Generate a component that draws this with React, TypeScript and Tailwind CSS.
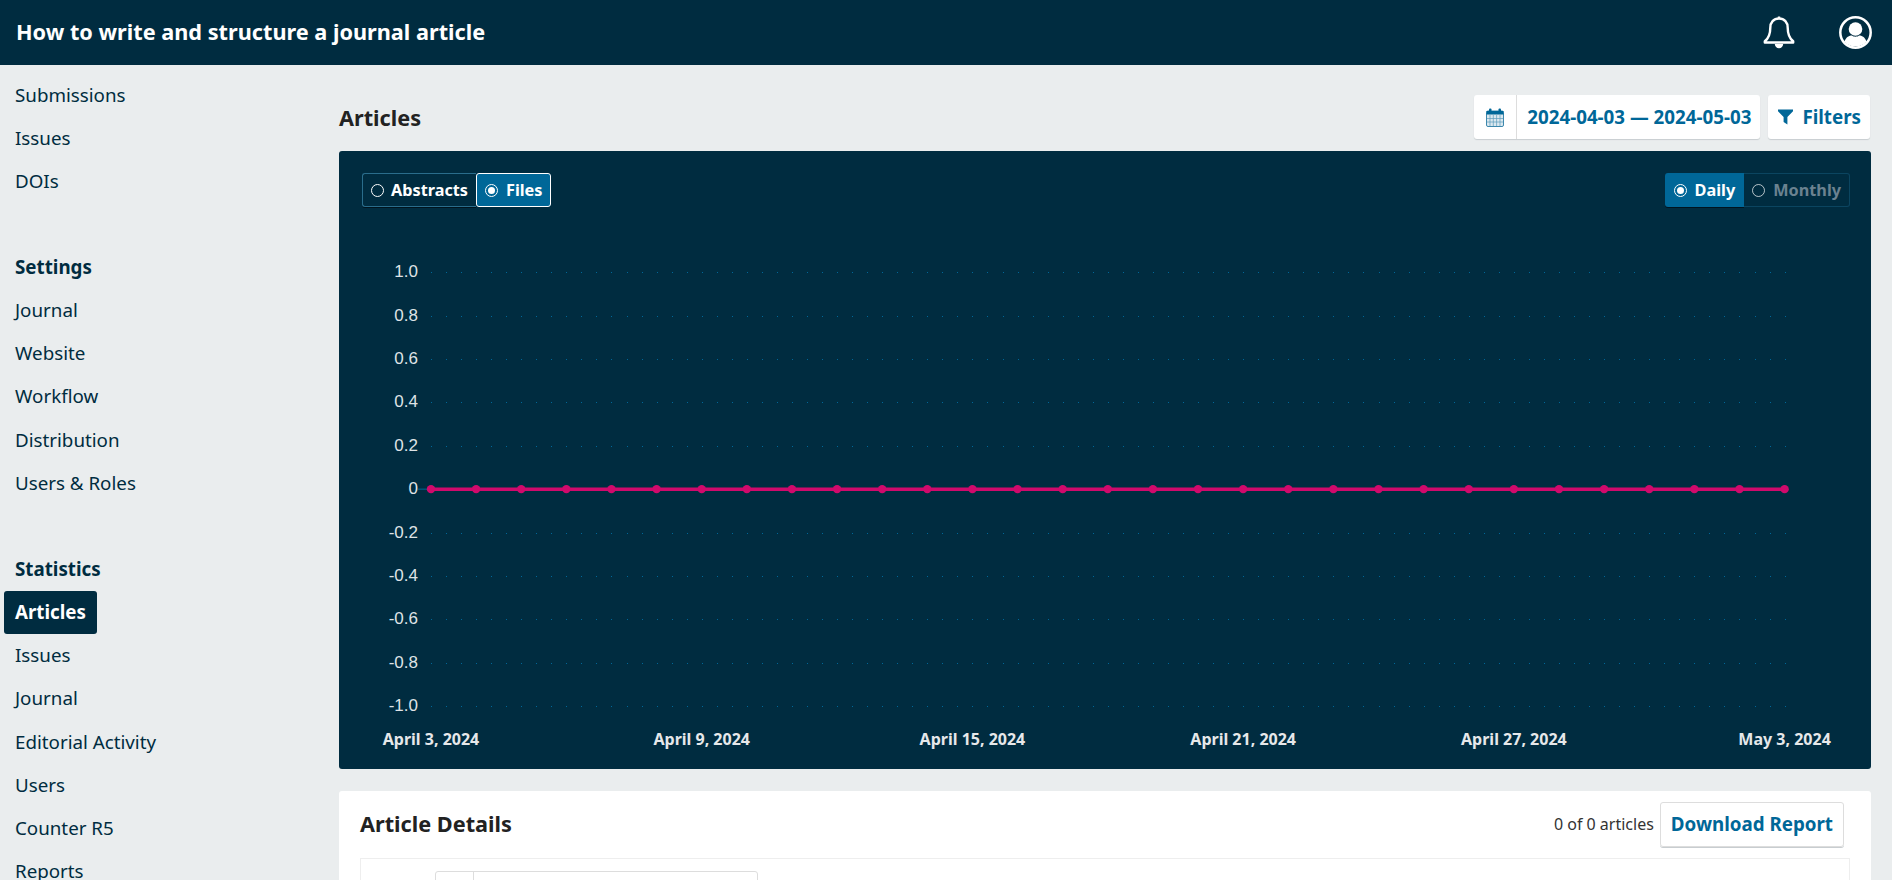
import React from 'react';

const font = 'font-["Noto_Sans",sans-serif]';

function NavItem({ label, active }: { label: string; active?: boolean }) {
  return (
    <li className="h-[43.2px] flex items-center">
      {active ? (
        <span className="ml-[4px] px-[11px] h-[43px] flex items-center rounded-[3px] bg-[#002c40] text-white font-bold">{label}</span>
      ) : (
        <span className="ml-[15px]">{label}</span>
      )}
    </li>
  );
}

function NavGroup({ title, items, active }: { title?: string; items: string[]; active?: string }) {
  return (
    <div className="mb-[43px]">
      {title && <div className="h-[43px] flex items-center ml-[15px] font-bold">{title}</div>}
      <ul>
        {items.map(i => <NavItem key={i} label={i} active={i === active} />)}
      </ul>
    </div>
  );
}

function Radio({ on }: { on?: boolean }) {
  return (
    <span className="w-[13px] h-[13px] rounded-full border border-white flex items-center justify-center shrink-0">
      {on && <span className="w-[7px] h-[7px] rounded-full bg-white" />}
    </span>
  );
}

const yLabels = ['1.0', '0.8', '0.6', '0.4', '0.2', '0', '-0.2', '-0.4', '-0.6', '-0.8', '-1.0'];
const xLabels = ['April 3, 2024', 'April 9, 2024', 'April 15, 2024', 'April 21, 2024', 'April 27, 2024', 'May 3, 2024'];

// chart is drawn from the left edge of the panel, just under the toggle row
function Chart() {
  const top = 65.3;
  const step = 43.37;
  const dots = Array.from({ length: 31 }, (_, i) => 92 + i * 45.12);
  const grid = Array.from({ length: 91 }, (_, i) => 92 + i * 15.04);
  return (
    <svg className="block" width="1532" height="550" viewBox="0 0 1532 550">
      {yLabels.map((l, i) => (
        <g key={l}>
          <text x="79" y={top + i * step + 5} textAnchor="end" fontSize="17" fontWeight="400" fill="#dfe3e6" fontFamily="Liberation Sans, Arial, sans-serif">{l}</text>
          {l !== '0' && grid.map(x => <rect key={x} x={Math.round(x)} y={Math.round(top + i * step)} width="1" height="1" fill="#006798" />)}
        </g>
      ))}
      <line x1="79" x2="92" y1={top + 5 * step} y2={top + 5 * step} stroke="#006798" strokeWidth="1" />
      <line x1="92" x2="1445.6" y1={top + 5 * step} y2={top + 5 * step} stroke="#d00a6c" strokeWidth="3.500" />
      {dots.map(x => <circle key={x} cx={x} cy={top + 5 * step} r="4.200" fill="#d00a6c" />)}
      {xLabels.map((l, i) => (
        <text key={l} x={92 + i * 270.72} y="538" textAnchor="middle" fontSize="16" fontWeight="700" fill="#e6e8ea" fontFamily="Noto Sans, sans-serif">{l}</text>
      ))}
    </svg>
  );
}

export default function App() {
  return (
    <div className={`${font} h-[880px] overflow-hidden bg-[#eaedee] text-[18.75px] text-[#002c40]`}>
      <header className="h-[65px] bg-[#002c40] text-white flex items-center justify-between pl-[16px] pr-[20px]">
        <h1 className="text-[21.700px] font-bold">How to write and structure a journal article</h1>
        <div className="flex items-center gap-[44px]">
          <svg width="32" height="35" viewBox="0 0 32 35" fill="none" stroke="white" strokeWidth="2.400" strokeLinejoin="round">
            <path d="M16 3.500c-5.500 0-8.700 4-8.700 9.200 0 6.500-1.400 10.400-5.500 13.600v1.200h28.400v-1.200c-4.100-3.200-5.500-7.100-5.500-13.600 0-5.200-3.200-9.200-8.700-9.200z" />
            <path d="M16 1.500v2" />
            <path d="M13 29a3 3 0 0 0 6 0" fill="white" />
          </svg>
          <svg width="33" height="33" viewBox="0 0 33 33">
            <circle cx="16.500" cy="16.500" r="15.200" fill="none" stroke="white" strokeWidth="2.500" />
            <circle cx="16.500" cy="13" r="6.800" fill="white" />
            <path d="M5.500 25.500c1.500-4.500 5-6 7.300-6 1 .8 2.400 1.200 3.700 1.200s2.700-.4 3.700-1.200c2.300 0 5.800 1.500 7.300 6-2.700 3.200-6.600 5-11 5s-8.300-1.800-11-5z" fill="white" />
          </svg>
        </div>
      </header>
      <div className="flex">
        <nav className="w-[339px] shrink-0 pt-[8px]">
          <NavGroup items={['Submissions', 'Issues', 'DOIs']} />
          <NavGroup title="Settings" items={['Journal', 'Website', 'Workflow', 'Distribution', 'Users & Roles']} />
          <NavGroup title="Statistics" items={['Articles', 'Issues', 'Journal', 'Editorial Activity', 'Users', 'Counter R5', 'Reports']} active="Articles" />
        </nav>
        <main className="w-[1532px] shrink-0">
          <div className="flex items-center justify-between h-[86px] pt-[18px]">
            <h2 className="text-[21.700px] font-bold text-[#222222] pt-[3px]">Articles</h2>
            <div className="flex gap-[8px] text-[#006798] font-bold text-[18.750px] mr-[1px]">
              <div className="flex h-[44px] bg-white rounded-[3px] shadow-[0_1px_1px_#c8cdd0]">
                <span className="w-[43px] flex items-center justify-center border-r border-[#dddddd]">
                  <svg width="18" height="19" viewBox="0 0 18 19" fill="none">
                    <rect x="0.500" y="3" width="17" height="15.500" rx="1.500" fill="#dbe8ef" stroke="#3d88ad" />
                    <rect x="0.500" y="3" width="17" height="3.500" fill="#006798" />
                    <rect x="3" y="0.500" width="2.500" height="4" rx="1" fill="#006798" />
                    <rect x="12.500" y="0.500" width="2.500" height="4" rx="1" fill="#006798" />
                    <path d="M4 7v11M7.300 7v11M10.600 7v11M14 7v11M1 10.500h16M1 14h16" stroke="#5b9cbc" strokeWidth="0.700" />
                  </svg>
                </span>
                <span className="pl-[10px] pr-[9px] flex items-center">2024-04-03 — 2024-05-03</span>
              </div>
              <div className="flex items-center h-[44px] bg-white rounded-[3px] shadow-[0_1px_1px_#c8cdd0] pl-[10px] pr-[9px] gap-[9px]">
                <svg width="15" height="16" viewBox="0 0 15 16" fill="#006798">
                  <path d="M0 0.500h15v1.800L9.400 8v7.500L5.600 13V8L0 2.300z" />
                </svg>
                Filters
              </div>
            </div>
          </div>

          <section className="h-[618px] bg-[#002c40] rounded-[3px] pl-[23px] pr-[21px] pt-[22px] text-[16.250px] font-bold">
            <div className="flex justify-between h-[34px]">
              <div className="flex text-white">
                <span className="flex items-center gap-[7px] pl-[8px] pr-[8px] border border-[#2a6d8c] border-r-0 rounded-l-[3px] shadow-[0_1px_0_#00141f]"><Radio />Abstracts</span>
                <span className="flex items-center gap-[8px] pl-[8px] pr-[8px] bg-[#006798] border border-white rounded-[3px]"><Radio on />Files</span>
              </div>
              <div className="flex">
                <span className="flex items-center gap-[8px] pl-[9px] pr-[9px] bg-[#006798] text-white rounded-l-[3px] shadow-[0_1px_0_#00141f]"><Radio on />Daily</span>
                <span className="flex items-center gap-[8px] pl-[8px] pr-[8px] text-[#6b8290] border border-[#0b4560] border-l-0 rounded-r-[3px]"><span className="opacity-70"><Radio /></span>Monthly</span>
              </div>
            </div>
            <div className="-ml-[23px]">
              <Chart />
            </div>
          </section>

          <section className="mt-[22px] h-[200px] bg-white rounded-[3px] pl-[21px] pr-[21px] pt-[10px]">
            <div className="flex items-center justify-between h-[46px]">
              <h3 className="text-[21.700px] font-bold text-[#222222]">Article Details</h3>
              <div className="flex items-center gap-[6px] mr-[6px]">
                <span className="text-[16px] text-[#333333]">0 of 0 articles</span>
                <span className="h-[45px] px-[10px] flex items-center text-[18.750px] font-bold text-[#006798] border border-[#dddddd] rounded-[3px] shadow-[0_1px_0_#c8cdd0]">Download Report</span>
              </div>
            </div>
            <div className="mt-[11px] h-[100px] border border-[#eeeeee] pl-[74px] pt-[12px]">
              <div className="w-[323px] h-[60px] flex border border-[#dddddd] rounded-[3px]">
                <span className="w-[38px] border-r border-[#dddddd]" />
              </div>
            </div>
          </section>
        </main>
      </div>
    </div>
  );
}
